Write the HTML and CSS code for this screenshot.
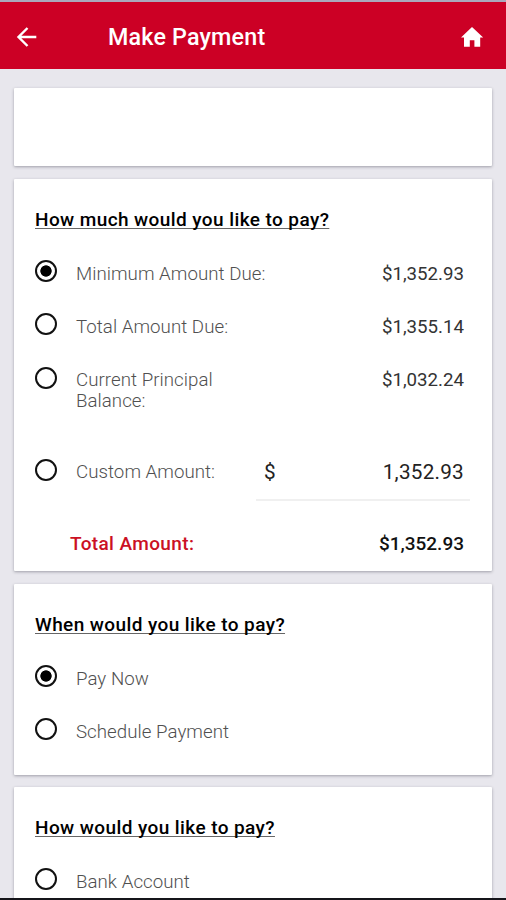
FILE: index.html
```html
<!DOCTYPE html>
<html lang="en">
<head>
<meta charset="utf-8">
<title>Make Payment</title>
<link rel="stylesheet" href="styles.css">
</head>
<body>
<header class="bar">
  <svg class="back" width="24" height="24" viewBox="0 0 24 24"><path d="M21.3 12H4M12.5 3 3.5 12l9 9" fill="none" stroke="currentColor" stroke-width="2.4"/></svg>
  <h1 class="title">Make Payment</h1>
  <svg class="home" width="24" height="24" viewBox="0 0 24 24"><path d="M12 2 1 12.5h3v9.3h5.8v-6.6h4.6v6.6h5.8v-9.3h3z" fill="currentColor"/></svg>
</header>
<main class="page">
  <section class="card card-empty"></section>
  <section class="card card-amount">
    <h2 class="question"><span>How much would you like to pay?</span></h2>
    <label class="row"><span class="radio checked"></span><span class="name">Minimum Amount Due:</span><span class="value">$1,352.93</span></label>
    <label class="row"><span class="radio"></span><span class="name">Total Amount Due:</span><span class="value">$1,355.14</span></label>
    <label class="row row-principal"><span class="radio"></span><span class="name">Current Principal<br>Balance:</span><span class="value">$1,032.24</span></label>
    <div class="row row-custom"><span class="radio"></span><span class="name">Custom Amount:</span><span class="field"><span>$</span><span>1,352.93</span></span></div>
    <div class="total"><span class="total-name">Total Amount:</span><span class="total-value">$1,352.93</span></div>
  </section>
  <section class="card card-when">
    <h2 class="question"><span>When would you like to pay?</span></h2>
    <label class="row"><span class="radio checked"></span><span class="name">Pay Now</span></label>
    <label class="row"><span class="radio"></span><span class="name">Schedule Payment</span></label>
  </section>
  <section class="card card-how">
    <h2 class="question"><span>How would you like to pay?</span></h2>
    <label class="row"><span class="radio"></span><span class="name">Bank Account</span></label>
  </section>
</main>
</body>
</html>
```
FILE: styles.css
```css
* { box-sizing: border-box; }
body {
  margin: 0;
  height: 900px;
  overflow: hidden;
  display: flex;
  flex-direction: column;
  border-top: 2px solid #aaa8bc;
  border-bottom: 2px solid #15151a;
  background: #e8e7ed;
  font-family: Roboto, sans-serif;
  color: #111;
}
.bar {
  flex: none;
  height: 67px;
  display: flex;
  align-items: center;
  padding: 3px 22px 0 15px;
  background: #cc0025;
  color: #fff;
}
.title {
  flex: 1;
  margin: 0 0 0 69px;
  font-size: 23.3px;
  font-weight: 500;
  letter-spacing: .18px;
  line-height: 30px;
}
.page {
  flex: 1;
  min-height: 0;
  overflow: hidden;
  padding: 19px 14px 0;
}
.card {
  margin-bottom: 12px;
  padding: 29px 28px 0 21px;
  background: #fff;
  border-radius: 1px;
  box-shadow: 0 1px 3px rgba(60, 60, 75, .42);
}
.card-empty { height: 78px; margin-bottom: 13px; }
.card-amount { height: 392px; margin-bottom: 13px; }
.card-when { height: 191px; }
.card-how { height: 191px; }
.question {
  height: 24px;
  margin: 0 0 13px;
  font-size: 19px;
  font-weight: 500;
  letter-spacing: .41px;
  line-height: 24px;
  color: #000;
  text-decoration: underline;
  text-decoration-color: #666;
  text-decoration-thickness: 1px;
  text-decoration-skip-ink: none;
  text-underline-offset: 2px;
}
.row {
  display: flex;
  align-items: flex-start;
  height: 53.3px;
  padding-top: 15px;
}
.row-principal { height: 92.4px; }
.row-custom { height: 88px; }
.radio {
  flex: none;
  width: 22px;
  height: 22px;
  border: 2px solid #111;
  border-radius: 50%;
}
.checked { background: radial-gradient(circle, #000 5.3px, transparent 6px); }
.name {
  flex: 1;
  margin: 3.5px 0 0 19px;
  font-size: 18.7px;
  font-weight: 300;
  letter-spacing: .04px;
  line-height: 21px;
  color: #505050;
  white-space: nowrap;
}
.value {
  margin-top: 3.5px;
  font-size: 18.7px;
  line-height: 21px;
  color: #333;
}
.field {
  display: flex;
  flex: none;
  justify-content: space-between;
  width: 214px;
  height: 42px;
  margin-right: -6px;
  padding: 2px 6px 0 8px;
  border-bottom: 2px solid #f0f0f0;
  font-size: 20.7px;
  letter-spacing: .25px;
  line-height: 22px;
  color: #222;
}
.total {
  display: flex;
  justify-content: space-between;
  padding-left: 35px;
  font-size: 19px;
  font-weight: 500;
  line-height: 24px;
}
.total-name { color: #cb1024; letter-spacing: .37px; }
```
